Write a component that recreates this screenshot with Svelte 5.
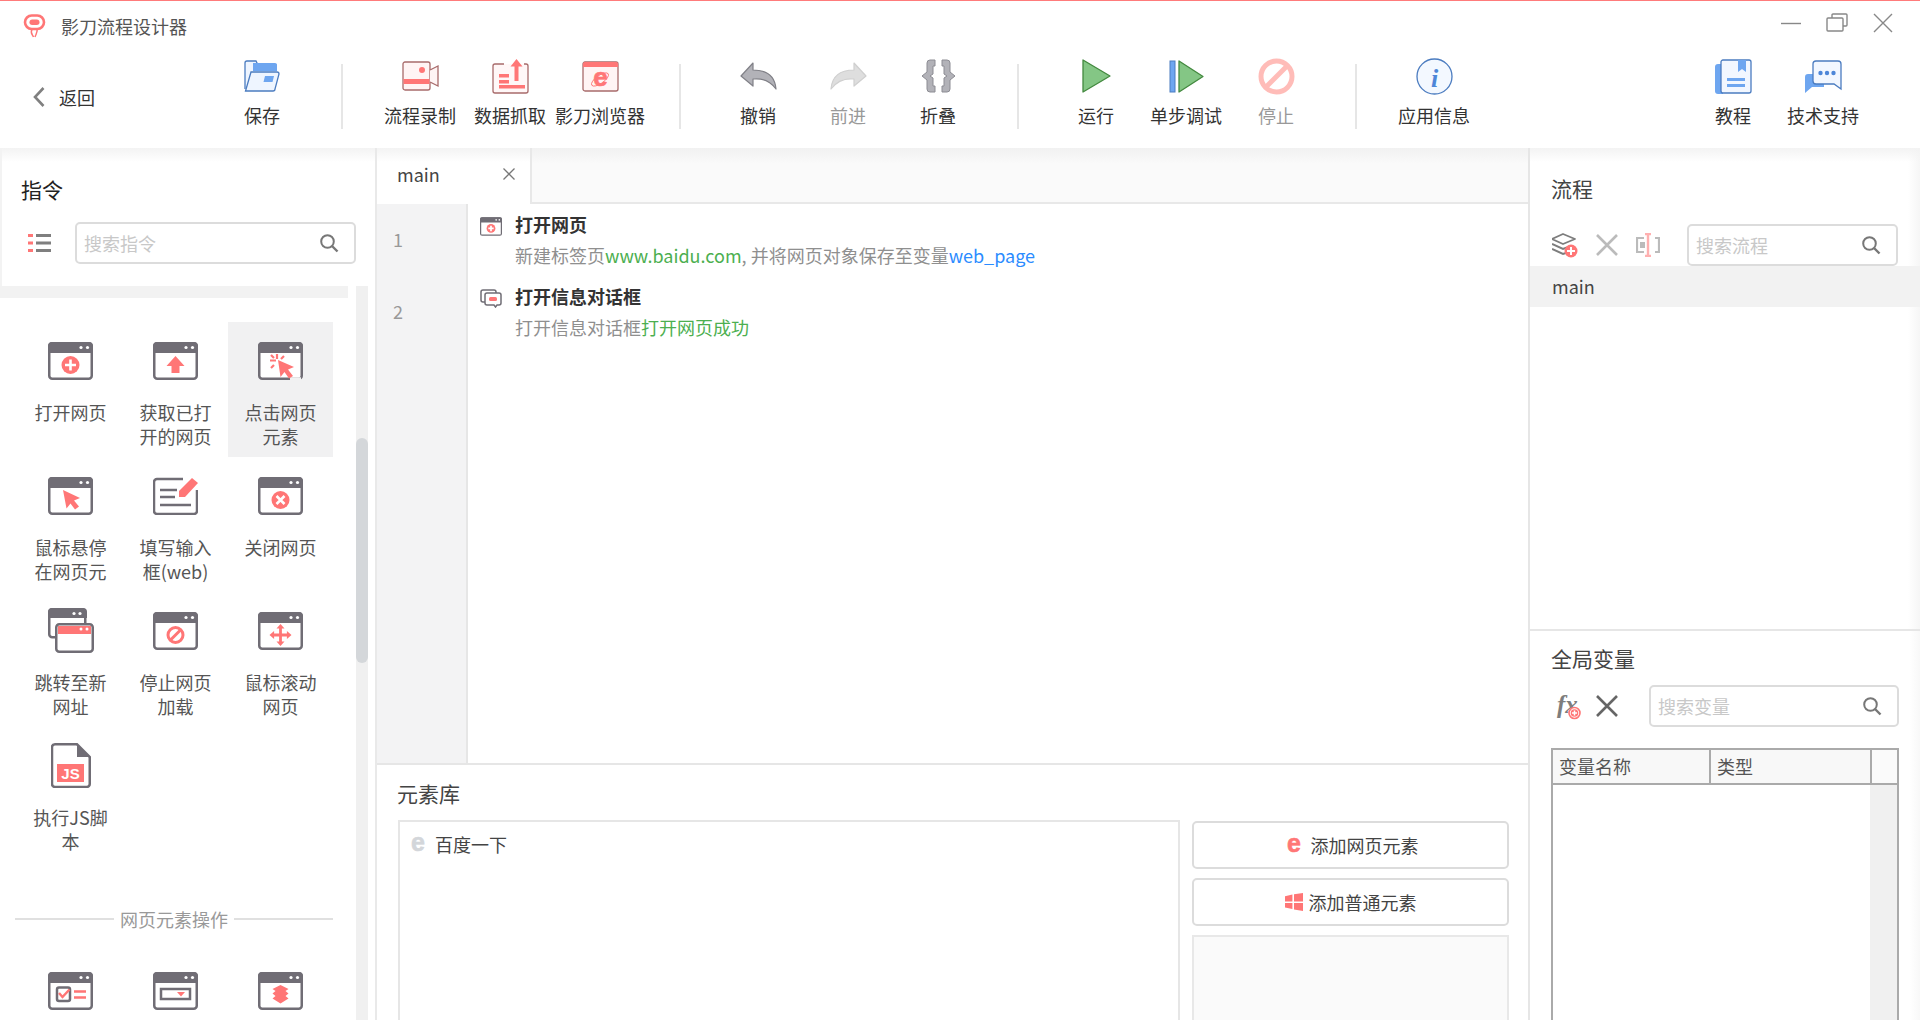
<script>
  const R = '#ff7676';
  const G = '#706d75';
  const groups = [
    [{ k: 'save', t: '保存' }],
    [{ k: 'rec', t: '流程录制' }, { k: 'data', t: '数据抓取' }, { k: 'browser', t: '影刀浏览器' }],
    [{ k: 'undo', t: '撤销' }, { k: 'redo', t: '前进', off: true }, { k: 'fold', t: '折叠' }],
    [{ k: 'run', t: '运行' }, { k: 'step', t: '单步调试' }, { k: 'stop', t: '停止', off: true }],
    [{ k: 'info', t: '应用信息' }]
  ];
  const cmds = [
    { k: 'plus', t: '打开网页' },
    { k: 'up', t: '获取已打开的网页' },
    { k: 'click', t: '点击网页元素', on: true },
    { k: 'pointer', t: '鼠标悬停在网页元' },
    { k: 'edit', t: '填写输入框(web)' },
    { k: 'x', t: '关闭网页' },
    { k: 'jump', t: '跳转至新网址' },
    { k: 'ban', t: '停止网页加载' },
    { k: 'move', t: '鼠标滚动网页' },
    { k: 'js', t: '执行JS脚本' }
  ];
  const ops = ['check', 'drop', 'layers'];
</script>

{#snippet win()}
  <rect x="1.25" y="1.25" width="42.5" height="35.5" rx="3" fill="#fff" stroke={G} stroke-width="2.5" />
  <path d="M0 11V4a4 4 0 0 1 4-4h37a4 4 0 0 1 4 4v7z" fill={G} />
  <circle cx="33" cy="5.5" r="1.6" fill="#fff" />
  <circle cx="39.5" cy="5.5" r="1.6" fill="#fff" />
{/snippet}

{#snippet winIcon(k)}
  {#if k === 'edit'}
    <svg width="45" height="38" viewBox="0 0 45 38">
      <path d="M30 2H4a3 3 0 0 0-3 3v29a3 3 0 0 0 3 3h37a3 3 0 0 0 3-3V13" fill="none" stroke={G} stroke-width="2.5" />
      <path d="M7 13h17M7 20h15M7 28h31" stroke={G} stroke-width="2.5" fill="none" />
      <path d="M26 20v-6L39 1l6 5-13 14z" fill={R} />
    </svg>
  {:else if k === 'jump'}
    <svg width="46" height="45" viewBox="0 0 46 45">
      <rect x="1.25" y="1.25" width="36" height="28" rx="3" fill="#fff" stroke={G} stroke-width="2.5" />
      <path d="M0 10V4a4 4 0 0 1 4-4h31a4 4 0 0 1 4 4v6z" fill={G} />
      <circle cx="26" cy="5.5" r="1.6" fill="#fff" /><circle cx="32" cy="5.5" r="1.6" fill="#fff" />
      <rect x="8.25" y="16.25" width="36.5" height="27.5" rx="3" fill="#fff" stroke={G} stroke-width="2.5" />
      <rect x="10" y="18" width="33" height="8" fill={R} />
      <circle cx="33" cy="21" r="1.5" fill="#fff" /><circle cx="39" cy="21" r="1.5" fill="#fff" />
    </svg>
  {:else if k === 'js'}
    <svg width="40" height="45" viewBox="0 0 40 45">
      <path d="M4 1.25h22L38.75 14v27a3 3 0 0 1-3 3H4a3 3 0 0 1-3-3V4a3 3 0 0 1 3-2.75z" fill="#fff" stroke={G} stroke-width="2.5" />
      <path d="M26 1l13 13H26z" fill={G} />
      <rect x="6" y="21" width="27" height="18" fill={R} />
      <text x="19.5" y="36" text-anchor="middle" class="jsT">JS</text>
    </svg>
  {:else}
    <svg width="45" height="38" viewBox="0 0 45 38">
      {@render win()}
      {#if k === 'plus'}
        <circle cx="22.5" cy="23" r="9" fill={R} />
        <path d="M22.5 17.5v11M17 23h11" stroke="#fff" stroke-width="2.6" />
      {:else if k === 'up'}
        <path d="M22.5 14l9 10h-5v7h-8v-7h-5z" fill={R} />
      {:else if k === 'click'}
        <path d="M32 37h11" stroke="#f2f2f2" stroke-width="3.5" />
        <path d="M20 18l16 7-6 2.5 5 6.5-4 2.5-4.5-6.5-4 5z" fill={R} />
        <path d="M12 18.5h6M19 12v5M26 14l-3 3M13 13l3 3M13 26l3-3" stroke={R} stroke-width="2.2" fill="none" />
      {:else if k === 'pointer'}
        <path d="M15 13l17 8-6 2.5 5 6-4 3-4.5-6-4 5z" fill={R} />
      {:else if k === 'x'}
        <circle cx="22.5" cy="23" r="9" fill={R} />
        <path d="M18.5 19l8 8M26.5 19l-8 8" stroke="#fff" stroke-width="2.6" />
      {:else if k === 'ban'}
        <circle cx="22.5" cy="23" r="7.5" fill="#fff" stroke={R} stroke-width="3" />
        <path d="M17.5 28l10-10" stroke={R} stroke-width="3" />
      {:else if k === 'move'}
        <path d="M22.5 12l4 4.5h-2.6v5h5V19l4.6 4-4.6 4v-2.5h-5v5h2.6l-4 4.5-4-4.5h2.6v-5h-5V27l-4.6-4 4.6-4v2.5h5v-5h-2.6z" fill={R} />
      {:else if k === 'check'}
        <rect x="9" y="15.5" width="13" height="13.5" rx="2" fill="#fff" stroke={G} stroke-width="2.5" />
        <path d="M11 21l3.5 4 7-7.5" fill="none" stroke={R} stroke-width="2.5" />
        <path d="M26 19.5h12M26 25.5h12" stroke={R} stroke-width="2.5" />
      {:else if k === 'drop'}
        <rect x="8" y="17" width="29" height="10" fill="#fff" stroke={G} stroke-width="2.5" />
        <path d="M24 20h8l-4 4.5z" fill={R} />
      {:else if k === 'layers'}
        <path d="M22.5 13l8 4-3 2 3 2.5-3 2.5 3 2.5-8 5-8-5 3-2.5-3-2.5 3-2.5-3-2z" fill={R} />
      {/if}
    </svg>
  {/if}
{/snippet}

{#snippet tool(k)}
  {#if k === 'save'}
    <svg width="36" height="32" viewBox="0 0 36 32">
      <path d="M1 29V3a2 2 0 0 1 2-2h9l2 4h18v6" fill="#eef5ff" stroke="#4b7cc0" stroke-width="1.3" />
      <path d="M9 3h22a2 2 0 0 1 2 2v6H9z" fill="#6ea6f0" />
      <path d="M7 12h26a2 2 0 0 1 2 2l-4 15a2 2 0 0 1-2 2H1.5z" fill="#eef5ff" stroke="#4b7cc0" stroke-width="1.3" />
      <path d="M21 16h9l-1.5 6h-9z" fill="#6ea6f0" />
    </svg>
  {:else if k === 'rec'}
    <svg width="37" height="30" viewBox="0 0 37 30">
      <rect x="1" y="1" width="27" height="28" rx="2" fill="#fff4f4" stroke="#a86b6b" stroke-width="1.3" />
      <path d="M28 9l8-4v20l-8-4" fill="#fff4f4" stroke="#a86b6b" stroke-width="1.3" />
      <rect x="1.5" y="18" width="26" height="5" fill={R} />
      <circle cx="20" cy="9" r="3" fill={R} />
    </svg>
  {:else if k === 'data'}
    <svg width="37" height="35" viewBox="0 0 37 35">
      <path d="M12 5H3a2 2 0 0 0-2 2v25a2 2 0 0 0 2 2h31a2 2 0 0 0 2-2V7a2 2 0 0 0-2-2h-2" fill="#fff7f7" stroke="#a86b6b" stroke-width="1.3" />
      <path d="M24.5 0l6 7.5h-4V22h-4V7.5h-4z" fill={R} />
      <path d="M7 15h10v3.5H7zM7 21h10v3.5H7zM7 26h26v3.5H7z" fill={R} />
    </svg>
  {:else if k === 'browser'}
    <svg width="37" height="31" viewBox="0 0 37 31">
      <rect x="1" y="1" width="35" height="29" rx="2" fill="#fff4f4" stroke="#a86b6b" stroke-width="1.3" />
      <path d="M1 6V3a2 2 0 0 1 2-2h31a2 2 0 0 1 2 2v3z" fill={R} />
      <text x="18.5" y="25" text-anchor="middle" class="eT big">e</text>
      <ellipse cx="18" cy="18.5" rx="10" ry="4" transform="rotate(-35 18 18.5)" fill="none" stroke={R} stroke-width="0.9" />
    </svg>
  {:else if k === 'undo'}
    <svg width="37" height="28" viewBox="0 0 37 28">
      <path d="M13 1L1 14l12 10v-7c9-1 17 2 23 10C35 14 27 8 13 8z" fill="#b2b2b8" stroke="#808087" stroke-width="1.2" stroke-linejoin="round" />
    </svg>
  {:else if k === 'redo'}
    <svg width="37" height="28" viewBox="0 0 37 28">
      <path d="M24 1l12 13-12 10v-7C15 16 7 19 1 27 2 14 10 8 24 8z" fill="#dedede" stroke="#cfcfcf" stroke-width="1.2" stroke-linejoin="round" />
    </svg>
  {:else if k === 'fold'}
    <svg width="35" height="34" viewBox="0 0 35 34">
      <path d="M14 1H9a3 3 0 0 0-3 3v9l-5 4 5 4v9a3 3 0 0 0 3 3h5v-6h-2V19l-3-2 3-2V7h2zM21 1h5a3 3 0 0 1 3 3v9l5 4-5 4v9a3 3 0 0 1-3 3h-5v-6h2V19l3-2-3-2V7h-2z" fill="#b2b2b8" stroke="#8c8c93" stroke-width="1" stroke-linejoin="round" />
    </svg>
  {:else if k === 'run'}
    <svg width="29" height="34" viewBox="0 0 29 34">
      <path d="M1 1l27 16L1 33z" fill="#84c685" stroke="#43893f" stroke-width="1.3" stroke-linejoin="round" />
    </svg>
  {:else if k === 'step'}
    <svg width="35" height="33" viewBox="0 0 35 33">
      <rect x="1" y="1" width="5" height="31" fill="#6ea6f0" stroke="#4b7cc0" />
      <path d="M10 1l24 15.5L10 32z" fill="#84c685" stroke="#43893f" stroke-width="1.3" stroke-linejoin="round" />
    </svg>
  {:else if k === 'stop'}
    <svg width="37" height="37" viewBox="0 0 37 37">
      <circle cx="18.5" cy="18.5" r="15.5" fill="#fff" stroke="#ffbcb8" stroke-width="5" />
      <path d="M8 29L29 8" stroke="#ffbcb8" stroke-width="5" />
    </svg>
  {:else if k === 'info'}
    <svg width="37" height="37" viewBox="0 0 37 37">
      <circle cx="18.5" cy="18.5" r="17.5" fill="#f3f8ff" stroke="#4b7cc0" stroke-width="1.3" />
      <text x="18.5" y="28.5" text-anchor="middle" class="iT">i</text>
    </svg>
  {:else if k === 'book'}
    <svg width="37" height="35" viewBox="0 0 37 35">
      <path d="M7 5H3a3 3 0 0 0-3 3v24a3 3 0 0 0 3 3h5z" fill="#6ea6f0" />
      <rect x="6" y="1" width="30" height="33" rx="2" fill="#f2f7ff" stroke="#4b7cc0" stroke-width="1.3" />
      <path d="M23 1h8v12l-4-3-4 3z" fill="#6ea6f0" />
      <path d="M12 19h18v3H12zM12 25h18v3H12z" fill="#6ea6f0" />
    </svg>
  {:else if k === 'chat'}
    <svg width="37" height="33" viewBox="0 0 37 33">
      <path d="M0 17a3 3 0 0 1 3-3h16v13H7l-7 6z" fill="#6ea6f0" />
      <path d="M8 4a3 3 0 0 1 3-3h22a3 3 0 0 1 3 3v25l-7-5H11a3 3 0 0 1-3-3z" fill="#f2f7ff" stroke="#4b7cc0" stroke-width="1.3" />
      <circle cx="15.5" cy="13" r="2.2" fill="#4d86d8" /><circle cx="22" cy="13" r="2.2" fill="#4d86d8" /><circle cx="28.5" cy="13" r="2.2" fill="#4d86d8" />
    </svg>
  {/if}
{/snippet}

{#snippet search(ph, cls)}
  <div class="search {cls}">
    <input placeholder={ph} />
    <svg width="20" height="20" viewBox="0 0 20 20">
      <circle cx="8.5" cy="8.5" r="6.3" fill="none" stroke="#777" stroke-width="2" />
      <path d="M13 13l5.5 5.5" stroke="#777" stroke-width="2.4" />
    </svg>
  </div>
{/snippet}

{#snippet item(c)}
  <div class="cmd" class:on={c.on}>
    <div class="cmd-icon">{@render winIcon(c.k)}</div>
    <div class="cmd-t">{c.t}</div>
  </div>
{/snippet}

<div class="app">
  <header class="title">
    <svg width="23" height="24" viewBox="0 0 23 24">
      <rect x="2" y="1.5" width="19" height="13.5" rx="6.7" fill="#fff" stroke={R} stroke-width="2.6" />
      <rect x="6.5" y="5.5" width="10" height="5.5" rx="2.7" fill={R} />
      <path d="M9 15c-2 4 0 5 1.5 8M14 15c1 3-1 5-2 8" fill="none" stroke={R} stroke-width="1.5" />
    </svg>
    <span class="app-name">影刀流程设计器</span>
    <div class="winctl">
      <svg width="20" height="20" viewBox="0 0 20 20"><path d="M0 10.5h20" stroke="#888" stroke-width="1.4" /></svg>
      <svg width="22" height="20" viewBox="0 0 22 20">
        <path d="M6 5V2a1 1 0 0 1 1-1h13a1 1 0 0 1 1 1v10a1 1 0 0 1-1 1h-3" fill="none" stroke="#888" stroke-width="1.4" />
        <rect x="1" y="5" width="16" height="13" rx="1" fill="#fff" stroke="#888" stroke-width="1.4" />
      </svg>
      <svg width="20" height="20" viewBox="0 0 20 20"><path d="M1 1l18 18M19 1L1 19" stroke="#888" stroke-width="1.4" /></svg>
    </div>
  </header>

  <div class="toolbar">
    <div class="back">
      <svg width="14" height="22" viewBox="0 0 14 22"><path d="M11.5 2L3 11l8.5 9" fill="none" stroke="#808080" stroke-width="2.6" /></svg>
      <span>返回</span>
    </div>
    {#each groups as g, i}
      {#if i > 0}<div class="sep"></div>{/if}
      {#each g as b}
        <div class="tbtn" class:off={b.off}>
          <div class="ticon">{@render tool(b.k)}</div>
          <div class="tlabel">{b.t}</div>
        </div>
      {/each}
    {/each}
    <div class="grow"></div>
    <div class="tbtn"><div class="ticon">{@render tool('book')}</div><div class="tlabel">教程</div></div>
    <div class="tbtn"><div class="ticon">{@render tool('chat')}</div><div class="tlabel">技术支持</div></div>
  </div>

  <div class="main">
    <aside class="left">
      <div class="left-head">
        <h2 class="ptitle black">指令</h2>
        <div class="ctl">
          <svg class="listic" width="23" height="18" viewBox="0 0 23 18">
            <path d="M0 1.5h5M0 9h5M0 16.5h5" stroke={R} stroke-width="3" />
            <path d="M8 1.5h15M8 9h15M8 16.5h15" stroke="#7f7f7f" stroke-width="3" />
          </svg>
          {@render search('搜索指令', 'w281')}
        </div>
      </div>
      <div class="left-body">
        <div class="cmds">
          <div class="band"></div>
          <div class="grid">
            {#each cmds as c}{@render item(c)}{/each}
          </div>
          <div class="divider"><i></i><span>网页元素操作</span><i></i></div>
          <div class="grid">
            {#each ops as k}
              <div class="cmd"><div class="cmd-icon">{@render winIcon(k)}</div></div>
            {/each}
          </div>
        </div>
        <div class="track"><div class="thumb"></div></div>
      </div>
    </aside>

    <section class="center">
      <div class="tabs">
        <div class="tab">
          <span>main</span>
          <svg width="12" height="12" viewBox="0 0 12 12"><path d="M.5.5l11 11M11.5.5l-11 11" stroke="#777" stroke-width="1.3" /></svg>
        </div>
        <div class="tabrest"></div>
      </div>
      <div class="editor">
        <div class="gutter"><div class="ln">1</div><div class="ln">2</div></div>
        <div class="steps">
          <div class="step">
            <svg class="sic" width="22" height="19" viewBox="0 0 45 38">{@render win()}<circle cx="22.5" cy="23" r="9" fill={R} /><path d="M22.5 17.5v11M17 23h11" stroke="#fff" stroke-width="3.5" /></svg>
            <div>
              <div class="st">打开网页</div>
              <div class="sd">新建标签页<span class="g">www.baidu.com</span>, 并将网页对象保存至变量<span class="b">web_page</span></div>
            </div>
          </div>
          <div class="step">
            <svg class="sic" width="22" height="19" viewBox="0 0 22 19">
              <path d="M5 13H3a2 2 0 0 1-2-2V3a2 2 0 0 1 2-2h11a2 2 0 0 1 2 2v1" fill="none" stroke={G} stroke-width="1.5" />
              <path d="M7 4h12a2 2 0 0 1 2 2v8a2 2 0 0 1-2 2h-2l-1.5 2-1.5-2H7a2 2 0 0 1-2-2V6a2 2 0 0 1 2-2z" fill="#fff" stroke={G} stroke-width="1.5" />
              <rect x="9" y="8" width="8" height="4" rx="1.5" fill={R} />
            </svg>
            <div>
              <div class="st">打开信息对话框</div>
              <div class="sd">打开信息对话框<span class="g">打开网页成功</span></div>
            </div>
          </div>
        </div>
      </div>
      <div class="lib">
        <h2 class="ptitle">元素库</h2>
        <div class="lib-body">
          <div class="lib-list">
            <svg class="eic" width="22" height="30" viewBox="0 0 22 30"><text x="11" y="22" text-anchor="middle" class="eT grey">e</text></svg>
            <span>百度一下</span>
          </div>
          <div class="lib-side">
            <div class="btn">
              <svg width="22" height="30" viewBox="0 0 22 30"><text x="11" y="22" text-anchor="middle" class="eT">e</text></svg>
              <span>添加网页元素</span>
            </div>
            <div class="btn">
              <svg width="18" height="18" viewBox="0 0 17 17"><path d="M0 3l7-1.5V8H0zM8.5 1.2L17 0v8H8.5zM0 9.5h7V15l-7-1.3zM8.5 9.5H17V17l-8.5-1.5z" fill={R} /></svg>
              <span>添加普通元素</span>
            </div>
            <div class="preview"></div>
          </div>
        </div>
      </div>
    </section>

    <aside class="right">
      <div class="flows">
        <h2 class="ptitle">流程</h2>
        <div class="ctl flowctl">
          <svg width="26" height="25" viewBox="0 0 26 25">
            <path d="M11 1l12 5-12 5L0 6z" fill="#fff" stroke="#7d7d7d" stroke-width="1.8" stroke-linejoin="round" />
            <path d="M0 11l11 5 4-1.5M0 16l11 5 3-1" fill="none" stroke="#7d7d7d" stroke-width="2" />
            <circle cx="19" cy="18" r="6.5" fill={R} />
            <path d="M19 14v8M15 18h8" stroke="#fff" stroke-width="2" />
          </svg>
          <svg class="mx" width="22" height="22" viewBox="0 0 22 22"><path d="M1 1l20 20M21 1L1 21" stroke="#bbb" stroke-width="2.6" /></svg>
          <svg class="mx" width="24" height="24" viewBox="0 0 24 24">
            <path d="M8 5H1v14h7M19 5h4v14h-4" fill="none" stroke="#bbb" stroke-width="2.2" />
            <rect x="4" y="9" width="5" height="6" fill="#bbb" />
            <path d="M12 1v22M9 1h6M9 23h6" stroke="#ffb0b0" stroke-width="2.4" />
          </svg>
          {@render search('搜索流程', 'w211 push')}
        </div>
        <div class="flow-row">main</div>
      </div>
      <div class="vars">
        <h2 class="ptitle">全局变量</h2>
        <div class="ctl varctl">
          <svg width="30" height="28" viewBox="0 0 30 28">
            <text x="5" y="21" class="fxT">fx</text>
            <circle cx="22.5" cy="21" r="5.5" fill="#fff" stroke={R} stroke-width="1.6" />
            <circle cx="22.5" cy="21" r="3.8" fill={R} />
            <path d="M22.5 18.5v5M20 21h5" stroke="#fff" stroke-width="1.5" />
          </svg>
          <svg class="mx2" width="22" height="22" viewBox="0 0 22 22"><path d="M1 1l20 20M21 1L1 21" stroke="#666" stroke-width="2.6" /></svg>
          {@render search('搜索变量', 'w250 push')}
        </div>
        <div class="table">
          <div class="thead">
            <div class="c1">变量名称</div>
            <div class="c2">类型</div>
            <div class="c3"></div>
          </div>
          <div class="tbody"><div class="ttrack"></div></div>
        </div>
      </div>
    </aside>
  </div>
</div>

<style>
  :global(body) {
    margin: 0;
    background: #fff;
  }
  .app {
    width: 1920px;
    height: 1020px;
    overflow: hidden;
    display: flex;
    flex-direction: column;
    font-family: "Noto Sans CJK SC", "Noto Sans", sans-serif;
    font-size: 18px;
    color: #444;
    box-sizing: border-box;
    border-top: 1px solid #ff7b7b;
  }
  .title {
    height: 49px;
    flex: none;
    display: flex;
    align-items: center;
    padding: 0 27px 0 23px;
  }
  .app-name {
    margin-left: 15px;
    color: #555;
    line-height: 24px;
  }
  .winctl {
    margin-left: auto;
    display: flex;
    gap: 25px;
    align-items: center;
    height: 20px;
    margin-top: -6px;
  }
  .toolbar {
    height: 98px;
    flex: none;
    display: flex;
    align-items: flex-start;
    padding-right: 52px;
  }
  .back {
    width: 217px;
    flex: none;
    display: flex;
    align-items: center;
    height: 24px;
    margin-top: 35px;
    padding-left: 32px;
    box-sizing: border-box;
    gap: 13px;
    color: #333;
  }
  .sep {
    width: 2px;
    height: 65px;
    margin: 14px 32px 0 34px;
    background: #e6e6e6;
    flex: none;
  }
  .tbtn {
    width: 90px;
    flex: none;
    text-align: center;
    color: #333;
  }
  .tbtn.off {
    color: #999;
  }
  .ticon {
    height: 36px;
    margin-top: 8px;
    display: flex;
    align-items: center;
    justify-content: center;
  }
  .tlabel {
    margin-top: 9px;
    line-height: 24px;
    white-space: nowrap;
  }
  .grow {
    flex: 1;
  }
  .main {
    flex: 1;
    display: flex;
    min-height: 0;
  }
  .left {
    width: 377px;
    flex: none;
    box-sizing: border-box;
    border-right: 2px solid #e9e9e9;
    display: flex;
    flex-direction: column;
  }
  .left-head {
    height: 138px;
    flex: none;
    padding: 28px 0 0 21px;
    box-sizing: border-box;
    background: linear-gradient(#f3f3f3, #fff 14px);
    box-shadow: inset 2px 0 0 #f3f3f3;
  }
  .ptitle {
    margin: 0;
    font-size: 21px;
    font-weight: 400;
    line-height: 26px;
    color: #444;
  }
  .ptitle.black {
    color: #222;
  }
  .ctl {
    display: flex;
    align-items: center;
  }
  .left-head .ctl {
    margin-top: 20px;
  }
  .listic {
    margin: 0 24px 0 7px;
    flex: none;
  }
  .search {
    height: 42px;
    box-sizing: border-box;
    border: 2px solid #dcdcdc;
    border-radius: 5px;
    display: flex;
    align-items: center;
    padding: 0 15px 0 7px;
    background: #fff;
    flex: none;
  }
  .search input {
    border: 0;
    outline: 0;
    flex: 1;
    min-width: 0;
    padding: 0;
    font: inherit;
    background: transparent;
  }
  .search input::placeholder {
    color: #c8c8c8;
    opacity: 1;
  }
  .w281 { width: 281px; }
  .w211 { width: 211px; }
  .w250 { width: 250px; }
  .left-body {
    flex: 1;
    min-height: 0;
    display: flex;
  }
  .cmds {
    width: 356px;
    flex: none;
    overflow: hidden;
  }
  .band {
    width: 348px;
    height: 12px;
    background: #f2f2f2;
  }
  .grid {
    display: grid;
    grid-template-columns: repeat(3, 105px);
    grid-auto-rows: 135px;
    margin-left: 18px;
  }
  .band + .grid {
    margin-top: 24px;
  }
  .cmd {
    text-align: center;
    color: #555;
    line-height: 24px;
  }
  .cmd.on {
    background: #f1f1f2;
  }
  .cmd-icon {
    height: 45px;
    margin-top: 16px;
    display: flex;
    align-items: center;
    justify-content: center;
  }
  .cmd-t {
    margin: 17px auto 0;
    width: 76px;
    word-break: break-all;
  }
  .divider {
    margin: 45px 0 21px 15px;
    width: 318px;
    display: flex;
    align-items: center;
    gap: 6px;
    line-height: 24px;
    color: #999;
  }
  .divider i {
    flex: 1;
    height: 2px;
    background: #e0e0e0;
  }
  .track {
    width: 12px;
    flex: none;
    background: #f0f0f0;
    padding-top: 152px;
    box-sizing: border-box;
  }
  .thumb {
    height: 225px;
    background: #d4d7da;
    border-radius: 6px;
  }
  .center {
    width: 1153px;
    flex: none;
    box-sizing: border-box;
    display: flex;
    flex-direction: column;
    border-right: 2px solid #e6e6e6;
  }
  .tabs {
    height: 56px;
    flex: none;
    display: flex;
  }
  .tab {
    width: 155px;
    box-sizing: border-box;
    display: flex;
    align-items: center;
    justify-content: space-between;
    padding: 0 15px 4px 20px;
    border-right: 2px solid #e8e8e8;
    background: linear-gradient(#f3f3f3, #fff 14px);
    color: #444;
  }
  .tabrest {
    flex: 1;
    border-bottom: 2px solid #e8e8e8;
    background: linear-gradient(#f1f1f1, #fafafa 16px);
  }
  .editor {
    height: 561px;
    flex: none;
    box-sizing: border-box;
    border-bottom: 2px solid #e6e6e6;
    display: flex;
  }
  .gutter {
    width: 91px;
    flex: none;
    box-sizing: border-box;
    background: #f3f3f4;
    border-right: 2px solid #e6e6e6;
    color: #999;
    padding-left: 16px;
  }
  .ln {
    height: 72px;
    line-height: 70px;
  }
  .steps {
    flex: 1;
    padding-left: 12px;
  }
  .step {
    height: 72px;
    box-sizing: border-box;
    padding-top: 7px;
    display: flex;
    gap: 13px;
  }
  .sic {
    margin-top: 6px;
    flex: none;
  }
  .st {
    font-weight: 700;
    color: #333;
    line-height: 26px;
  }
  .sd {
    margin-top: 5px;
    line-height: 26px;
    color: #8f8f8f;
    white-space: nowrap;
  }
  .g { color: #4caf50; }
  .b { color: #2b8cff; }
  .lib {
    flex: 1;
    min-height: 0;
    padding: 15px 19px 0 20px;
  }
  .lib-body {
    display: flex;
    gap: 12px;
    margin-top: 14px;
    margin-left: 1px;
    height: 260px;
  }
  .lib-list {
    width: 782px;
    flex: none;
    box-sizing: border-box;
    border: 2px solid #e6e6e6;
    padding: 10px 0 0 7px;
    display: flex;
    align-items: flex-start;
    gap: 6px;
    line-height: 24px;
  }
  .eic {
    margin-top: -3px;
  }
  .lib-side {
    flex: 1;
    display: flex;
    flex-direction: column;
    gap: 9px;
    padding-top: 1px;
  }
  .btn {
    height: 48px;
    flex: none;
    box-sizing: border-box;
    border: 2px solid #dcdcdc;
    border-radius: 5px;
    display: flex;
    align-items: center;
    justify-content: center;
    gap: 6px;
    line-height: 24px;
    padding-bottom: 1px;
  }
  .preview {
    flex: 1;
    background: #fafafa;
    border: 2px solid #e8e8e8;
  }
  .right {
    flex: 1;
    min-width: 0;
    display: flex;
    flex-direction: column;
  }
  .flows {
    height: 483px;
    flex: none;
    box-sizing: border-box;
    border-bottom: 2px solid #e6e6e6;
    padding-top: 27px;
    background: linear-gradient(#f3f3f3, transparent 14px), linear-gradient(to left, #f6f6f6, #fff 12px);
  }
  .flows .ptitle {
    margin-left: 21px;
  }
  .flowctl {
    margin-top: 23px;
    padding: 0 22px;
  }
  .mx {
    margin-left: 18px;
  }
  .push {
    margin-left: auto;
  }
  .flow-row {
    height: 41px;
    line-height: 41px;
    background: #f2f2f2;
    padding-left: 22px;
  }
  .vars {
    flex: 1;
    min-height: 0;
    padding-top: 14px;
    background: linear-gradient(to left, #f8f8f8, #fff 10px);
  }
  .vars .ptitle {
    margin-left: 21px;
  }
  .varctl {
    margin-top: 14px;
    padding: 0 21px 0 22px;
  }
  .mx2 {
    margin-left: 14px;
  }
  .table {
    margin: 21px 21px 0;
    height: 300px;
    box-sizing: border-box;
    border: 2px solid #aaa;
    display: flex;
    flex-direction: column;
  }
  .thead {
    height: 33px;
    flex: none;
    border-bottom: 2px solid #aaa;
    display: flex;
    background: #f8f8f8;
    color: #555;
    line-height: 33px;
  }
  .c1 {
    width: 150px;
    padding-left: 6px;
    border-right: 2px solid #aaa;
  }
  .c2 {
    width: 153px;
    padding-left: 6px;
    border-right: 2px solid #aaa;
  }
  .c3 {
    flex: 1;
    background: #fafafa;
  }
  .tbody {
    flex: 1;
    display: flex;
    justify-content: flex-end;
  }
  .ttrack {
    width: 27px;
    background: #f0f0f0;
  }
  .jsT {
    font: 700 15px "Liberation Sans", sans-serif;
    fill: #fff;
  }
  .eT {
    font: 700 25px "Liberation Sans", sans-serif;
    fill: #ff7676;
    stroke: #ff7676;
    stroke-width: 0.6px;
  }
  .eT.big {
    font-size: 26px;
  }
  .eT.grey {
    fill: #d3d6da;
    stroke: #d3d6da;
  }
  .iT {
    font: italic 700 26px "Liberation Serif", serif;
    fill: #4d86d8;
  }
  .fxT {
    font: italic 700 25px "Liberation Serif", serif;
    fill: #7d7d7d;
  }
</style>
